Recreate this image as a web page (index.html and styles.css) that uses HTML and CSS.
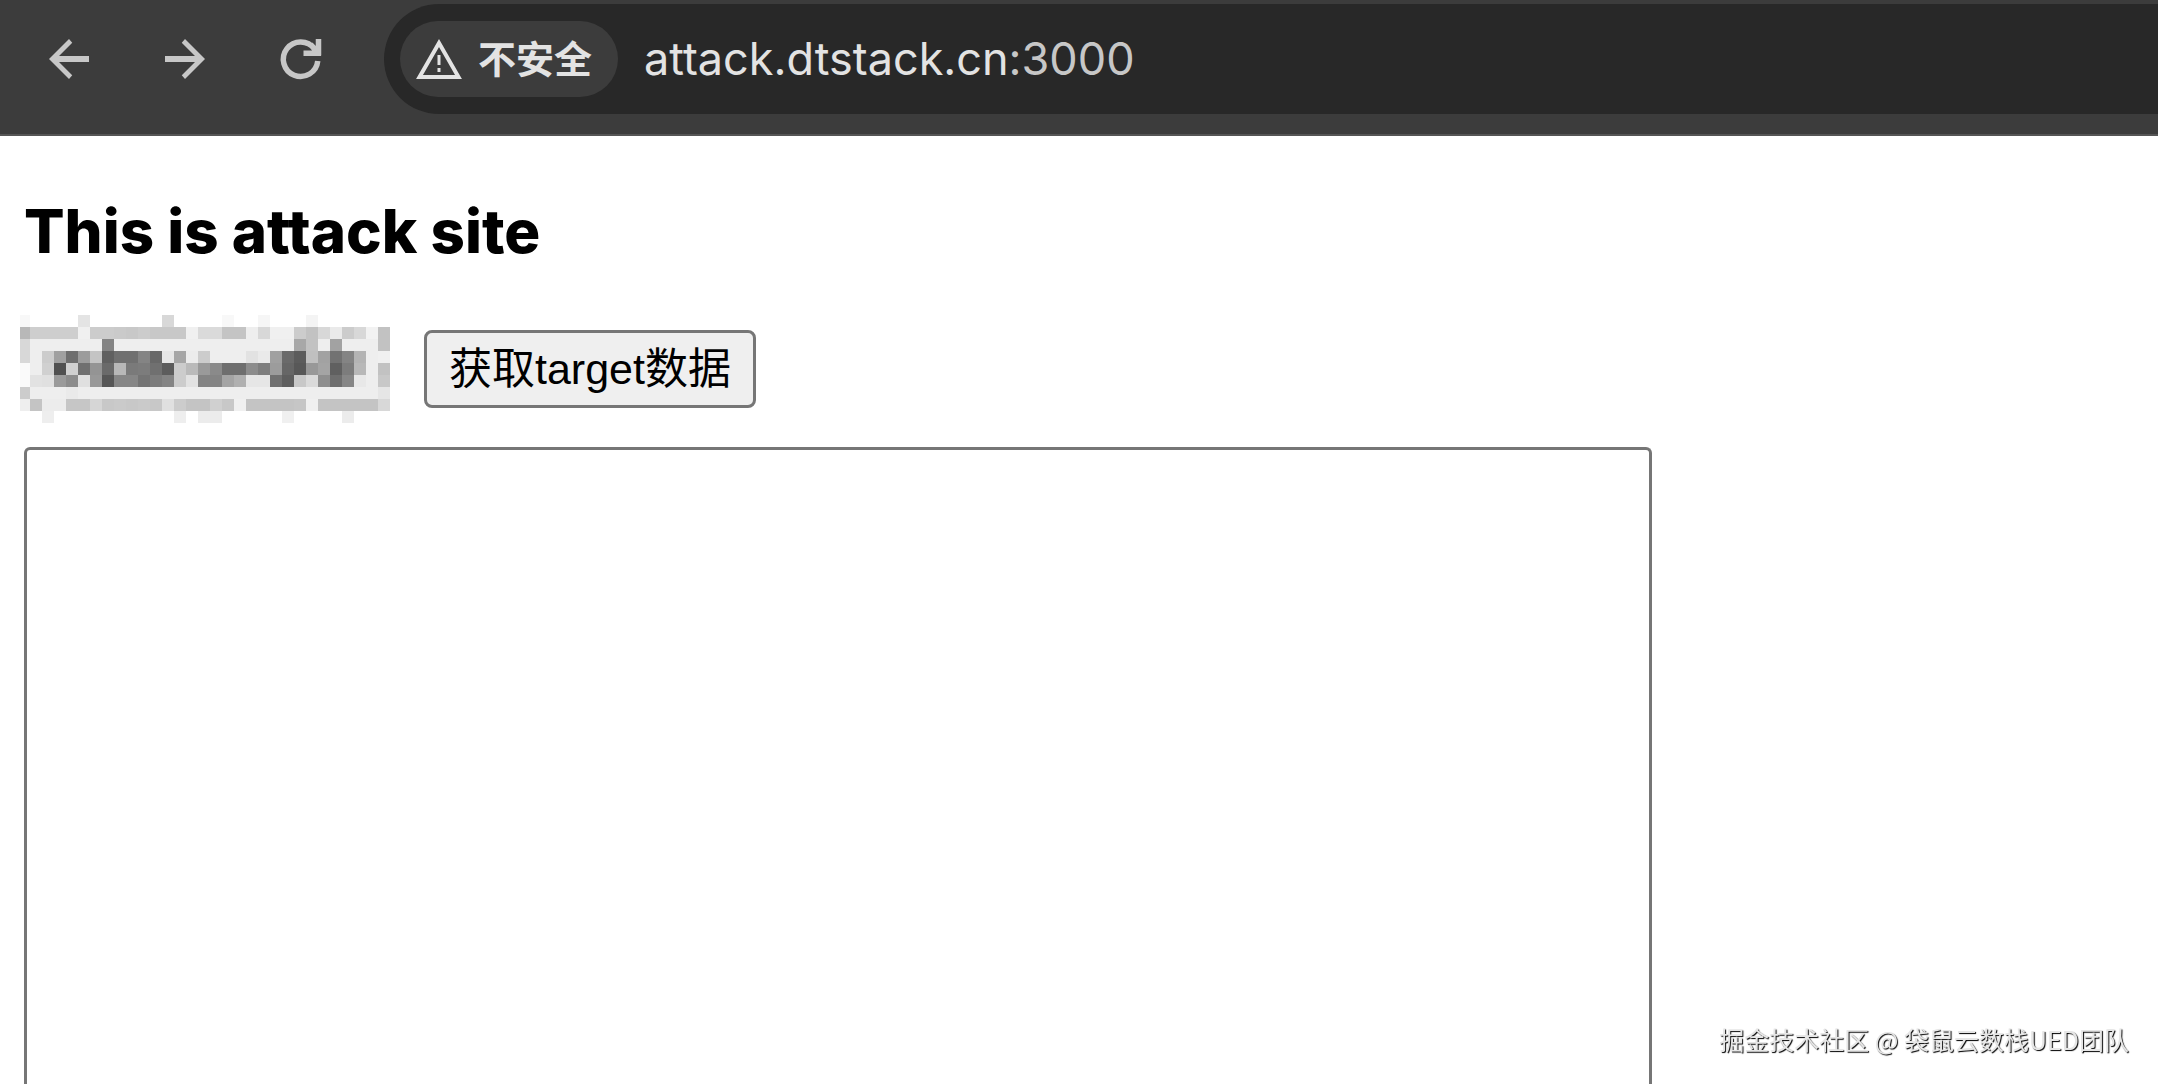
FILE: index.html
```html
<!DOCTYPE html>
<html lang="zh-CN">
<head>
<meta charset="UTF-8" />
<meta name="viewport" content="width=device-width, initial-scale=1" />
<title>attack.dtstack.cn:3000</title>
<link rel="stylesheet" href="styles.css">
</head>
<body>

<header class="toolbar">
  <nav class="nav-buttons">
    <button type="button" class="nav-button" aria-label="后退">
      <svg viewBox="0 0 24 24"><path d="M20 10.8H8l5.3-5.3L12 4l-8 8 8 8 1.3-1.5L8 13.2h12z"/></svg>
    </button>
    <button type="button" class="nav-button" aria-label="前进">
      <svg viewBox="0 0 24 24"><path d="M4 10.8h12l-5.3-5.3L12 4l8 8-8 8-1.3-1.5 5.3-5.3H4z"/></svg>
    </button>
    <button type="button" class="nav-button" aria-label="重新加载">
      <svg viewBox="0 0 24 24"><path class="stroke" d="M18.7 12.8A6.9 6.9 0 1 1 17.4 8M19 4v6.6M20 9.7H13M18.7 9.3L15.8 6.2"/></svg>
    </button>
  </nav>
  <div class="address-bar">
    <button type="button" class="security-chip">
      <svg class="warning-icon" viewBox="0 0 48 42"><path class="triangle" d="M24 5L43.5 39H4.5z"/><path class="mark" d="M24 17v10M24 30v4"/></svg>
      <span>不安全</span>
    </button>
    <div class="url">attack.dtstack.cn<span class="port">:3000</span></div>
  </div>
</header>

<main class="page">
  <h3 class="title">This is attack site</h3>
  <div class="actions">
    <button type="button" class="masked-button" aria-label="按钮">
      <svg id="mosaic" viewBox="2 0 370 108" shape-rendering="crispEdges"></svg>
    </button>
    <button type="button" class="fetch-button">获取target数据</button>
  </div>
  <textarea class="result" aria-label="target数据"></textarea>
</main>

<div class="watermark">掘金技术社区 @ 袋鼠云数栈UED团队</div>

<script>
// Grey level of every mosaic cell, two hex digits per cell
const rows = [
  'f8 ff ff ff ff e4 ff ff ff ff ff ff d8 ff ff ff ff f8 ff ff f6 ff ff ff f4 ff ff ff ff ff ff',
  'b8 ce ce ce ce f0 cc cc ca c8 cc c8 c8 c8 f0 da da c4 c4 ee d8 f0 f0 cc c2 d8 ea cc d8 f2 c2',
  'd8 ee ee ee ee ee ee 84 ee ee ee ee ee ee ee ee ee ee ee ee ee ee ee a8 c2 ee a2 ee ee ee c2',
  'd8 ee cc a0 6e 9c c4 60 70 70 84 68 e6 a6 ec cc ee ee ee e2 ea a0 6a 5c c0 a2 72 84 b4 ee f0',
  'fa ee d0 50 d0 70 94 6a b8 7a 7c 70 5c cc ba 9a 8a 6e 6e 8c 7e 9c 66 58 98 a4 60 7c b8 ee c2',
  'fa e2 e0 9a 8c e0 98 56 86 86 74 7c 84 cc e2 84 84 a4 b0 e6 e6 70 5e c8 da 8e 6e 86 e8 ee c8',
  'cc ee ee ee ea ee ee ee ee ee ee ee ee ee ee ee ee ee ee ee ee ee ee ee ee ee ee ee ee ee e6',
  'ee c4 ec ec c6 c6 d6 c8 ca c8 ca c8 e0 cc c4 c4 d0 c8 f0 c4 c4 c4 c4 c6 f0 c4 c4 c4 c4 c4 d8',
  'ff ff ee ff ff ff ff ff ff ff ff ff ff ee ff ec ec ff ff ff ff ff f0 ff ff ff ff ec ff ff ff'
];
const size = 12;
const mosaic = document.getElementById('mosaic');
rows.forEach((row, y) => {
  row.split(' ').forEach((level, x) => {
    const cell = document.createElementNS('http://www.w3.org/2000/svg', 'rect');
    cell.setAttribute('x', x * size);
    cell.setAttribute('y', y * size);
    cell.setAttribute('width', size);
    cell.setAttribute('height', size);
    cell.setAttribute('fill', '#' + level + level + level);
    mosaic.appendChild(cell);
  });
});
</script>

</body>
</html>
```
FILE: styles.css
```css
* {
  box-sizing: border-box;
}
body {
  display: flex;
  flex-direction: column;
  margin: 0;
  min-height: 100vh;
  background: #fff;
  color: #000;
  font-family: Inter, "Noto Sans CJK SC", sans-serif;
  font-variant-ligatures: none;
}
button {
  font: inherit;
  cursor: pointer;
}
.toolbar {
  display: flex;
  align-items: flex-start;
  height: 136px;
  padding: 4px 0 0 39px;
  background: #3c3c3c;
  border-bottom: 2px solid #555;
}
.nav-buttons {
  display: flex;
  align-items: center;
  gap: 56px;
  height: 110px;
  margin-right: 53px;
}
.nav-button {
  width: 60px;
  height: 60px;
  padding: 0;
  border: none;
  background: none;
}
.nav-button svg {
  display: block;
  fill: #c7c7c7;
}
.nav-button .stroke {
  fill: none;
  stroke: #c7c7c7;
  stroke-width: 2.2;
}
.address-bar {
  flex: 1;
  display: flex;
  align-items: center;
  gap: 26px;
  height: 110px;
  padding-left: 16px;
  background: #282828;
  border-radius: 55px 0 0 55px;
}
.security-chip {
  display: flex;
  align-items: center;
  gap: 15px;
  height: 76px;
  padding: 0 26px 0 15px;
  border: none;
  border-radius: 38px;
  background: #3c3c3c;
  color: #e3e3e3;
  font-size: 38px;
  font-weight: 700;
  line-height: 48px;
}
.warning-icon {
  width: 48px;
  height: 42px;
  fill: none;
  stroke: #e3e3e3;
}
.triangle {
  stroke-width: 4;
}
.mark {
  stroke-width: 3;
}
.url {
  color: #e3e3e3;
  font-size: 45px;
  line-height: 56px;
}
.port {
  color: #c7c7c7;
}
.page {
  flex: 1;
  display: flex;
  flex-direction: column;
  padding: 59px 20px 0 24px;
}
.title {
  margin: 0;
  font-size: 60px;
  font-weight: 800;
  line-height: 72px;
}
.actions {
  display: flex;
  align-items: center;
  gap: 34px;
  margin: 48px 0 24px -4px;
}
.masked-button {
  width: 370px;
  height: 108px;
  padding: 0;
  border: none;
  background: none;
}
.masked-button svg {
  display: block;
}
.fetch-button {
  height: 78px;
  padding: 0 22px;
  border: 3px solid #767676;
  border-radius: 8px;
  background: #efefef;
  color: #000;
  font-family: "Liberation Sans", "Noto Sans CJK SC", sans-serif;
  font-size: 43px;
  line-height: 60px;
}
.result {
  flex: 1;
  width: 77%;
  padding: 6px;
  border: 3px solid #767676;
  border-bottom: none;
  border-radius: 6px 6px 0 0;
  background: #fff;
  font-size: 40px;
  resize: none;
}
.watermark {
  position: fixed;
  right: 29px;
  bottom: 27px;
  color: #e6e6e6;
  font-family: "Noto Sans CJK SC", sans-serif;
  font-size: 25px;
  line-height: 36px;
  text-shadow: 1px 1px 1px #000;
}
```
